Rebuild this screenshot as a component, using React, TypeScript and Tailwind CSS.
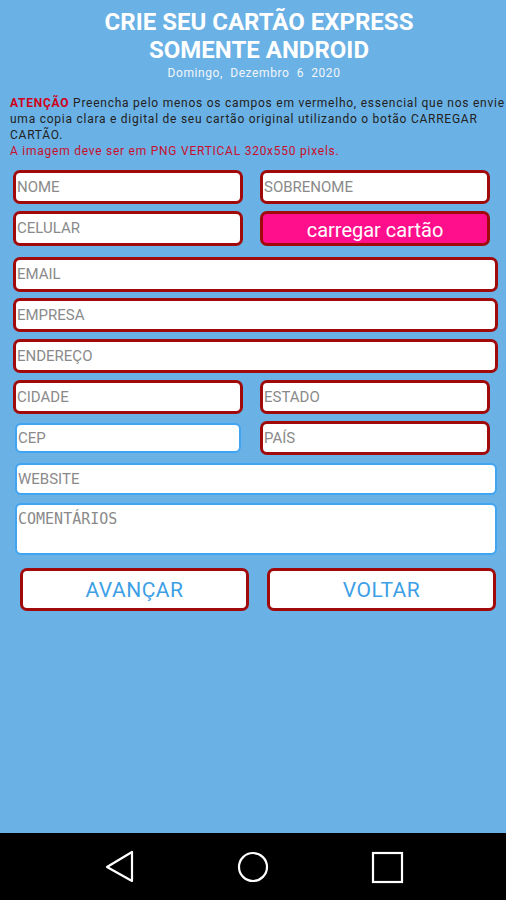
import React from "react";

const red = "border-[3px] border-[#a10a0a] rounded-[7px] bg-white";
const blue = "border-[2px] border-[#3fa4f2] rounded-[6px] bg-white";
const ph = "text-[15px] text-[#8a8a8a] leading-none pl-[1px]";

function Field({ label, cls, h, w }: { label: string; cls: string; h: string; w: string }) {
  return (
    <div className={`${cls} ${h} ${w} flex items-center`}>
      <span className={ph}>{label}</span>
    </div>
  );
}

export default function App() {
  return (
    <div className="w-[506px] h-[900px] flex flex-col bg-[#6ab1e5]" style={{ fontFamily: "Roboto, 'Liberation Sans', sans-serif" }}>
      <div className="flex-1 flex flex-col">
        <div className="flex flex-col items-center text-white pt-[8px]">
          <div className="text-[24px] font-bold leading-[28px] ml-[12px]">CRIE SEU CARTÃO EXPRESS</div>
          <div className="text-[24px] font-bold leading-[28px] ml-[12px]">SOMENTE ANDROID</div>
          <div className="text-[12px] leading-[16px] text-[#f2f6fa] tracking-[0.6px] pt-[1px] ml-[2px]">Domingo,&nbsp; Dezembro&nbsp; 6&nbsp; 2020</div>
        </div>
        <div className="pl-[10px] mt-[14px] text-[12px] leading-[16px] tracking-[0.75px] text-[#222] whitespace-nowrap overflow-hidden">
          <div><span className="font-bold text-[#d0021b]">ATENÇÃO</span> Preencha pelo menos os campos em vermelho, essencial que nos envie</div>
          <div>uma copia clara e digital de seu cartão original utilizando o botão CARREGAR</div>
          <div>CARTÃO.</div>
          <div className="text-[#c8102e]">A imagem deve ser em PNG VERTICAL 320x550 pixels.</div>
        </div>

        <div className="pl-[13px] mt-[11px] flex flex-col">
          <div className="flex gap-[17px]">
            <Field label="NOME" cls={red} h="h-[34px]" w="w-[230px]" />
            <Field label="SOBRENOME" cls={red} h="h-[34px]" w="w-[230px]" />
          </div>
          <div className="flex gap-[17px] mt-[7px]">
            <Field label="CELULAR" cls={red} h="h-[35px]" w="w-[230px]" />
            <div className={`h-[35px] w-[230px] border-[3px] border-[#a10a0a] rounded-[7px] bg-[#ff0f8c] flex items-center justify-center`}>
              <span className="text-white text-[20px] leading-none pt-[3px]">carregar cartão</span>
            </div>
          </div>
          <div className="mt-[11px]">
            <Field label="EMAIL" cls={red} h="h-[35px]" w="w-[485px]" />
          </div>
          <div className="mt-[6px]">
            <Field label="EMPRESA" cls={red} h="h-[34px]" w="w-[485px]" />
          </div>
          <div className="mt-[7px]">
            <Field label="ENDEREÇO" cls={red} h="h-[34px]" w="w-[485px]" />
          </div>
          <div className="flex gap-[17px] mt-[7px]">
            <Field label="CIDADE" cls={red} h="h-[34px]" w="w-[230px]" />
            <Field label="ESTADO" cls={red} h="h-[34px]" w="w-[230px]" />
          </div>
          <div className="flex items-start mt-[7px]">
            <div className="mt-[2px] ml-[2px]">
              <Field label="CEP" cls={blue} h="h-[30px]" w="w-[226px]" />
            </div>
            <div className="ml-[19px]">
              <Field label="PAÍS" cls={red} h="h-[34px]" w="w-[230px]" />
            </div>
          </div>
          <div className="mt-[8px] ml-[2px]">
            <Field label="WEBSITE" cls={blue} h="h-[32px]" w="w-[482px]" />
          </div>
          <div className="mt-[8px] ml-[2px]">
            <div className={`${blue} h-[52px] w-[482px] pt-[2px] pl-[1px]`}>
              <span className="text-[15px] text-[#8a8a8a] leading-none" style={{ fontFamily: "'DejaVu Sans Mono', 'Liberation Mono', monospace" }}>COMENTÁRIOS</span>
            </div>
          </div>
          <div className="flex mt-[13px] ml-[7px] gap-[18px]">
            <div className="h-[43px] w-[229px] border-[3px] border-[#a10a0a] rounded-[7px] bg-white flex items-center justify-center">
              <span className="text-[21px] text-[#3d9fe6] tracking-[0.5px] leading-none pt-[1px]">AVANÇAR</span>
            </div>
            <div className="h-[43px] w-[229px] border-[3px] border-[#a10a0a] rounded-[7px] bg-white flex items-center justify-center">
              <span className="text-[21px] text-[#3d9fe6] tracking-[0.5px] leading-none pt-[1px]">VOLTAR</span>
            </div>
          </div>
        </div>
      </div>
      <div className="h-[67px] bg-black flex items-center justify-center">
        <svg width="506" height="67" viewBox="0 0 506 67">
          <polygon points="132,19 132,48 107,34" fill="none" stroke="white" strokeWidth="2.2" strokeLinejoin="round" />
          <circle cx="253" cy="34" r="14" fill="none" stroke="white" strokeWidth="2.2" />
          <rect x="373" y="20" width="29" height="29" fill="none" stroke="white" strokeWidth="2.2" />
        </svg>
      </div>
    </div>
  );
}
